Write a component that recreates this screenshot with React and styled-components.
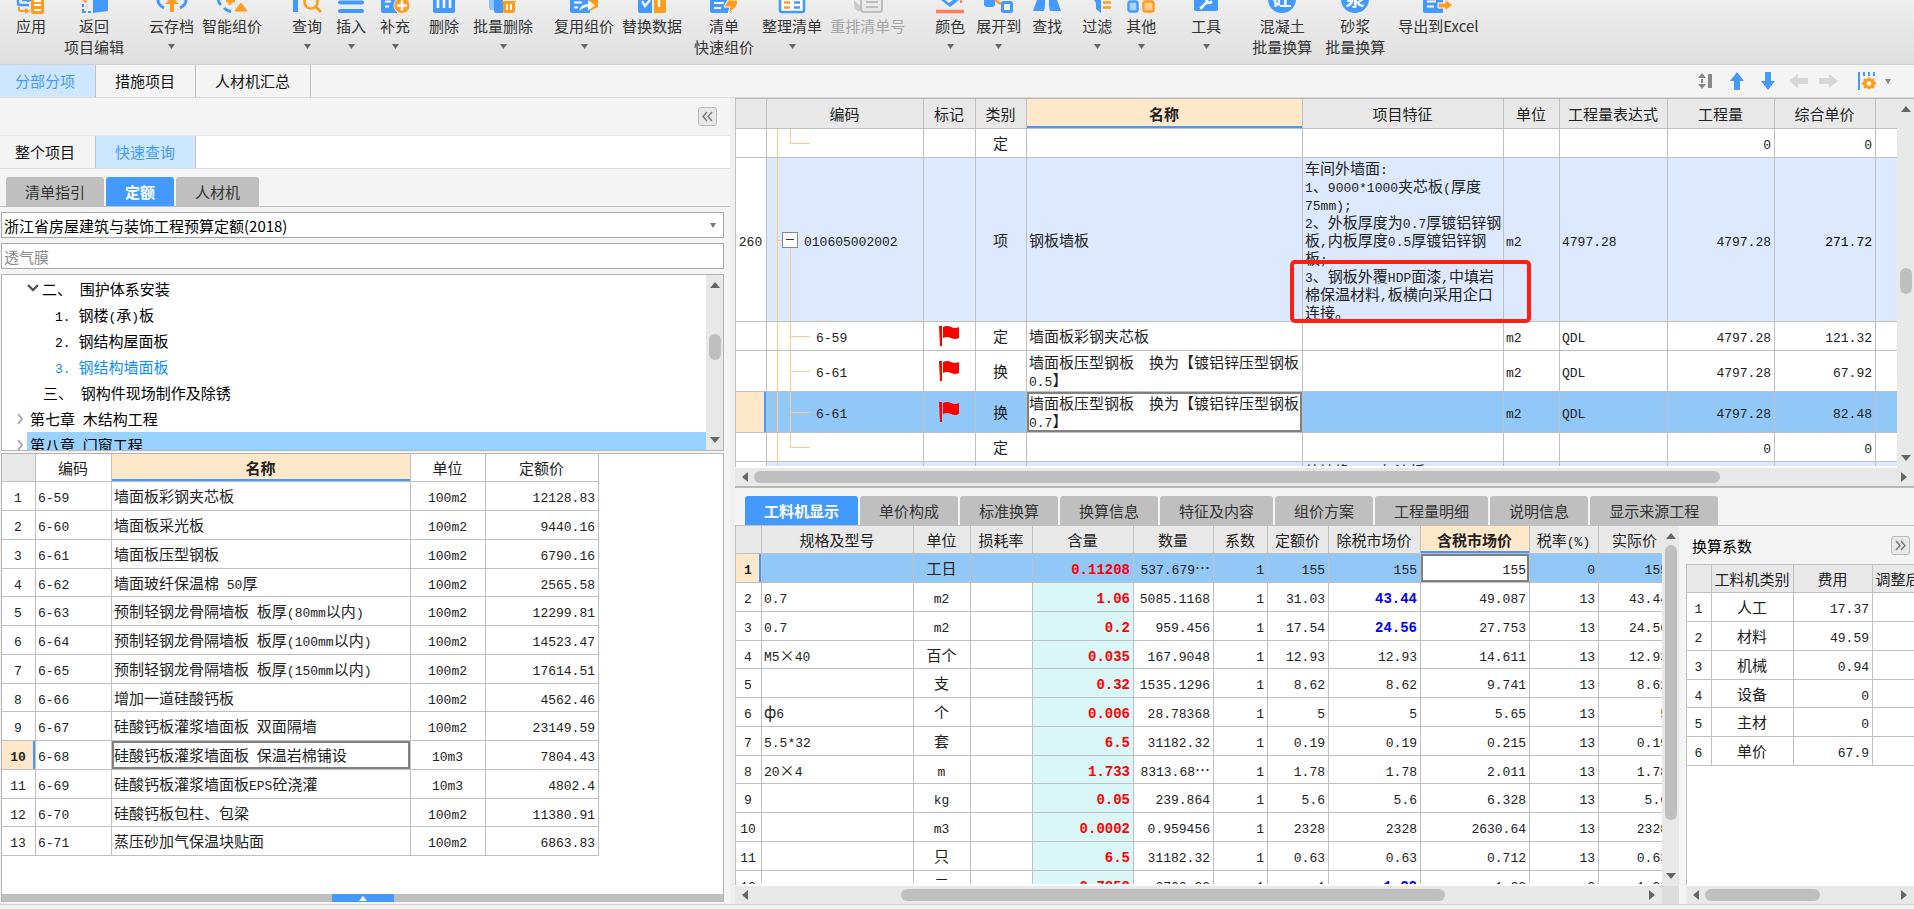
import React from 'react';
import styled, { createGlobalStyle, css } from 'styled-components';

const GlobalStyle = createGlobalStyle`
    * {
        box-sizing: border-box;
    }
    html, body {
        margin: 0;
        height: 100%;
        overflow: hidden;
    }
    body, button, input, select {
        font-family: 'Noto Sans CJK SC', sans-serif;
        font-size: 15px;
        color: #222;
    }
    button {
        border: none;
        padding: 0;
        cursor: pointer;
    }
`;

const LINE = '#c0c0c0';
const BLUE = '#4499ff';
const SKY = '#8fc4fd';
const ORANGE = '#ff9c1f';

const Page = styled.div`
    display: flex;
    flex-direction: column;
    height: 100vh;
    overflow: hidden;
    background: #f4f4f4;
`;

/* ---------- toolbar ---------- */

const Toolbar = styled.header`
    display: flex;
    flex: none;
    height: 65px;
    overflow: hidden;
    background: linear-gradient(#eeeeee, #dfdfdf);
    border-bottom: 1px solid #d0d0d0;
`;

const ToolButton = styled.button`
    display: flex;
    flex-direction: column;
    align-items: center;
    flex: none;
    min-width: 44px;
    padding: 0 4px;
    margin-left: ${props => props.$gap || 0}px;
    background: transparent;
    line-height: 21px;
    white-space: nowrap;
    color: ${props => (props.disabled ? '#a6a6a6' : '#333')};
    svg {
        display: block;
        flex: none;
    }
    > svg:first-child {
        margin-bottom: 1px;
    }
    .caret {
        margin-top: 8px;
    }
`;

const Caret = ({ size = 7, color = '#666', className }) => (
    <svg className={className} width={size} height="5" viewBox="0 0 8 5" preserveAspectRatio="none">
        <path d="M0 0h8L4 5z" fill={color}/>
    </svg>
);

const tools = [
    {
        gap: 9, label: '应用', art: <>
            <path d="M3 0v3q0 2 2 2h9M7 0h9M13 0v2" fill="none" stroke={BLUE} strokeWidth="2.4"/>
            <path d="M4 7v3q0 1 1 1h6" fill="none" stroke={ORANGE} strokeWidth="2"/>
            <path d="M10 8l5 3-5 3z" fill={ORANGE}/>
            <path d="M16 0h13v12q0 2-2 2h-9q-2 0-2-2z" fill={ORANGE}/>
            <path d="M19 1h7M19 5h7M19 10h7" stroke="#fff" strokeWidth="2"/>
        </>
    },
    {
        gap: 7, label: '返回', second: '项目编辑', art: <>
            <path d="M15 0h15v11l-15 2z" fill={BLUE}/>
            <path d="M5 0l4 2" stroke={ORANGE} strokeWidth="2"/>
            <path d="M5 4v3M5 9v3h3M10 12h3" fill="none" stroke={BLUE} strokeWidth="2.2"/>
        </>
    },
    {
        gap: 17, label: '云存档', caret: true, art: <>
            <path d="M2 0q0 5 6 8M30 0q0 5-6 8" fill="none" stroke={BLUE} strokeWidth="3"/>
            <path d="M16-3l7 7h-5v8h-4V4H9z" fill={ORANGE}/>
        </>
    },
    {
        label: '智能组价', art: <>
            <path d="M2 0q1 3 3 5M8 8q3 3 7 3.500" fill="none" stroke={BLUE} strokeWidth="3"/>
            <path d="M14 0v5M10 1h9" stroke={ORANGE} strokeWidth="3"/>
            <path d="M25 3l6 8h-12z" fill={ORANGE} stroke={ORANGE}/>
        </>
    },
    {
        gap: 19, label: '查询', caret: true, art: <>
            <path d="M2 0h5v12H2z" fill={BLUE}/>
            <circle cx="20" cy="2" r="6.500" fill="none" stroke={ORANGE} strokeWidth="2.600"/>
            <path d="M24 6l6 6" stroke={ORANGE} strokeWidth="3"/>
        </>
    },
    {
        label: '插入', caret: true, art: <>
            <path d="M5 2.500h22M5 11h22" stroke={BLUE} strokeWidth="4" strokeLinecap="round"/>
        </>
    },
    {
        label: '补充', caret: true, art: <>
            <path d="M2 0h16v13H4q-2 0-2-2z" fill={BLUE}/>
            <path d="M6 1.500h6M6 6.500h4" stroke="#fff" strokeWidth="2"/>
            <circle cx="23" cy="5.500" r="8" fill={ORANGE} stroke="#eee"/>
            <path d="M18 5.500h10M23 .5v10" stroke="#fff" strokeWidth="2.600"/>
        </>
    },
    {
        gap: 5, label: '删除', art: <>
            <path d="M5 0h22v11q0 2-2 2H7q-2 0-2-2z" fill={BLUE}/>
            <path d="M10 0v8M16 0v8M22 0v8" stroke="#fff" strokeWidth="2.600"/>
        </>
    },
    {
        gap: 3, label: '批量删除', caret: true, art: <>
            <path d="M2 0h10v10H5q-3 0-3-3z" fill={SKY}/>
            <path d="M7 0h9v13h-7q-2 0-2-2z" fill={BLUE}/>
            <path d="M15 1h14v1H28v9q0 2-2 2h-8q-2 0-2-2V3h-1z" fill={ORANGE}/>
            <path d="M20 4v6M24 4v6" stroke="#fff" strokeWidth="2"/>
        </>
    },
    {
        gap: 13, label: '复用组价', caret: true, art: <>
            <path d="M2 0h20v13H4q-2 0-2-2z" fill={BLUE}/>
            <path d="M6 2.500h8M6 7.500h4" stroke="#fff" strokeWidth="2"/>
            <path d="M22 0h8v7l-8 4z" fill={ORANGE}/>
            <path d="M11 11q2-7 9-7V0l7 5.500-7 5V7q-5 0-9 4z" fill="#fff"/>
        </>
    },
    {
        label: '替换数据', art: <>
            <path d="M2 0h14v13H4q-2 0-2-2z" fill={BLUE}/>
            <path d="M6 1l3 5 5-6" fill="none" stroke="#fff" strokeWidth="2.200"/>
            <path d="M18 0h12v11q0 2-2 2H18z" fill={ORANGE}/>
            <path d="M23 0v7" stroke="#fff" strokeWidth="2.400"/>
        </>
    },
    {
        gap: 4, label: '清单', second: '快速组价', art: <>
            <path d="M2 0h22v11q0 2-2 2H4q-2 0-2-2z" fill={BLUE}/>
            <path d="M6 3h10M6 8h7" stroke="#fff" strokeWidth="2"/>
            <path d="M20 0h10l-1 6-9 8 2-7h-6z" fill={ORANGE} stroke="#fff" strokeWidth="1"/>
        </>
    },
    {
        label: '整理清单', caret: true, art: <>
            <path d="M4 0v10q0 2 2 2h20q2 0 2-2V0" fill="#fff" stroke={BLUE} strokeWidth="2.600"/>
            <path d="M8 2.500h6M8 7.500h6" stroke={ORANGE} strokeWidth="2.400"/>
            <path d="M18 2.500h6M18 7.500h6" stroke={BLUE} strokeWidth="2.400"/>
        </>
    },
    {
        label: '重排清单号', disabled: true, art: <>
            <path d="M2 0l6 6v5H5q-3-3-3-7z" fill="#c9c9c9"/>
            <path d="M9 0v9q0 3 3 3h15q3 0 3-3V0" fill="#e9e9e9" stroke="#bdbdbd" strokeWidth="2"/>
            <path d="M14 2h12M14 7h12" stroke="#bdbdbd" strokeWidth="2"/>
        </>
    },
    {
        gap: 19, label: '颜色', caret: true, art: <>
            <path d="M7 0h18l-9 7z" fill={BLUE}/>
            <path d="M11 0h8l-4 3z" fill="#eee"/>
            <path d="M27 0q2 3 0 3t0-3" fill="#ff7f5c" stroke="#ff7f5c"/>
            <path d="M2 11.500h28" stroke="#ff7f5c" strokeWidth="3.500"/>
        </>
    },
    {
        label: '展开到', caret: true, art: <>
            <path d="M1 0h11v4q0 3-3 3H4q-3 0-3-3z" fill={BLUE}/>
            <path d="M12 0l6 4" stroke={ORANGE} strokeWidth="2.400"/>
            <rect x="19.500" y="2.500" width="9" height="9" rx="1" fill="#eaf4ff" stroke={BLUE} strokeWidth="3"/>
        </>
    },
    {
        label: '查找', art: <>
            <path d="M6 0h8v6l-1 5H2zM18 0h8l4 11H19l-1-5z" fill={BLUE}/>
        </>
    },
    {
        gap: 6, label: '过滤', caret: true, art: <>
            <path d="M13 0h7v13l-5-4V3z" fill={BLUE}/>
            <path d="M22 2.500h8M22 7.500h8" stroke={ORANGE} strokeWidth="2.600"/>
        </>
    },
    {
        label: '其他', caret: true, art: <>
            <rect x="3.500" y="1.500" width="9" height="10" rx="2" fill="#a9d3ff" stroke={BLUE} strokeWidth="2.400"/>
            <rect x="18.500" y="1.500" width="10" height="10" rx="2" fill="#ffcf8e" stroke={ORANGE} strokeWidth="2.400"/>
        </>
    },
    {
        gap: 21, label: '工具', caret: true, art: <>
            <path d="M4 0h24v9q0 2-2 2H6q-2 0-2-2z" fill={BLUE}/>
            <path d="M11 8l6-6q-1-2 1-3M17 2q2 2 4 0" fill="none" stroke="#fff" strokeWidth="2.600" strokeLinecap="round"/>
        </>
    },
    {
        gap: 20, label: '混凝土', second: '批量换算', art: <>
            <circle cx="16" cy="-1" r="14" fill={BLUE}/>
            <text x="16" y="6" fontSize="19" fontWeight="700" fill="#fff" textAnchor="middle">砼</text>
        </>
    },
    {
        gap: 5, label: '砂浆', second: '批量换算', art: <>
            <circle cx="16" cy="-1" r="14" fill={BLUE}/>
            <text x="16" y="6" fontSize="19" fontWeight="700" fill="#fff" textAnchor="middle">浆</text>
        </>
    },
    {
        gap: 5, label: '导出到Excel', art: <>
            <path d="M1 0h20v13H3q-2 0-2-2z" fill={BLUE}/>
            <path d="M5 1.500h9M5 6.500h7" stroke="#fff" strokeWidth="2"/>
            <path d="M16 3h7V-1l8 6-8 6V8h-7z" fill={ORANGE} stroke="#fff" strokeWidth="1"/>
        </>
    }
];

const Tool = ({ tool }) => (
    <ToolButton $gap={tool.gap} disabled={tool.disabled}>
        <svg width="32" height="14" viewBox="0 0 32 14">{tool.art}</svg>
        <span>{tool.label}</span>
        {tool.second && <span>{tool.second}</span>}
        {tool.caret && <Caret className="caret"/>}
    </ToolButton>
);

/* ---------- tabs ---------- */

const FlatTabs = styled.nav`
    display: flex;
    flex: none;
    height: 33px;
    background: ${props => props.$bg || '#f4f4f4'};
    border-bottom: 1px solid #dcdcdc;
`;

const FlatTab = styled.button`
    padding: 0 20px 0 19px;
    line-height: 32px;
    background: ${props => (props.$active ? '#cce7ff' : '#f4f4f4')};
    color: ${props => (props.$active ? BLUE : '#111')};
    border-right: 1px solid ${LINE};
    &:first-child {
        padding-left: 15px;
    }
`;

const ViewActions = styled.div`
    display: flex;
    align-items: center;
    gap: 11px;
    margin-left: auto;
    padding-right: 23px;
    button {
        display: flex;
        align-items: center;
        gap: 8px;
        background: transparent;
    }
`;

const BlockTabs = styled.nav`
    display: flex;
    flex: none;
    gap: 2px;
    height: 38px;
    padding: 8px 0 0 ${props => props.$indent}px;
    border-bottom: 1px solid ${LINE};
`;

const BlockTab = styled.button`
    padding: 0 19px;
    line-height: 29px;
    border-radius: 3px 3px 0 0;
    background: ${props => (props.$active ? BLUE : '#bfbfbf')};
    color: ${props => (props.$active ? '#fff' : '#333')};
    font-weight: ${props => (props.$active ? 700 : 400)};
`;

/* ---------- layout ---------- */

const Body = styled.div`
    display: grid;
    grid-template-columns: 735px minmax(0, 1fr);
    flex: 1;
    min-height: 0;
`;

const Side = styled.aside`
    display: flex;
    flex-direction: column;
    min-height: 0;
    border-right: 5px solid #efefef;
`;

const SideHead = styled.div`
    display: flex;
    justify-content: flex-end;
    align-items: center;
    flex: none;
    height: 38px;
    padding-right: 13px;
    border-bottom: 1px solid #e4e4e4;
`;

const FoldButton = styled.button`
    display: flex;
    align-items: center;
    justify-content: center;
    width: 19px;
    height: 19px;
    background: #e8e8e8;
    border: 1px solid #bbb;
    border-radius: 3px;
`;

const Query = styled.div`
    display: flex;
    flex-direction: column;
    flex: 1;
    gap: 5px;
    min-height: 0;
    margin: 5px 6px 2px 1px;
`;

const Field = styled.label`
    display: block;
    position: relative;
    height: 26px;
    flex: none;
    select, input {
        display: block;
        width: 100%;
        height: 100%;
        padding: 0 2px;
        border: 1px solid #a8a8a8;
        border-radius: 0;
        background: #fff;
        appearance: none;
        outline: none;
    }
    select {
        color: #000;
    }
    input {
        color: #888;
    }
    svg {
        position: absolute;
        right: 8px;
        top: 11px;
    }
`;

const Tree = styled.div`
    display: flex;
    flex: none;
    height: 177px;
    background: #fff;
    border: 1px solid #b4b4b4;
`;

const TreeList = styled.ul`
    flex: 1;
    margin: 0;
    padding: 1px 0 0;
    overflow: hidden;
    list-style: none;
`;

const TreeItem = styled.li`
    display: flex;
    align-items: center;
    height: 26px;
    padding-left: ${props => props.$indent}px;
    color: ${props => (props.$current ? '#0a8cff' : '#000')};
    white-space: pre;
    svg {
        flex: none;
        width: 12px;
    }
`;

const TreeLabel = styled.span`
    flex: 1;
    padding-left: 3px;
    line-height: 26px;
    background: ${props => (props.$selected ? '#99d1ff' : 'transparent')};
`;

const Results = styled.div`
    display: flex;
    flex-direction: column;
    flex: 1;
    min-height: 0;
    margin-top: -3px;
    background: #fff;
    border: 1px solid #b4b4b4;
    border-bottom: none;
    overflow: hidden;
`;

const Drawer = styled.div`
    display: flex;
    justify-content: center;
    flex: none;
    height: 8px;
    margin-top: auto;
    background: #bfbfbf;
    button {
        display: flex;
        align-items: center;
        justify-content: center;
        width: 62px;
        background: ${BLUE};
    }
`;

const Main = styled.main`
    display: flex;
    flex-direction: column;
    min-width: 0;
    min-height: 0;
`;

const UpperPane = styled.section`
    display: flex;
    flex-direction: column;
    flex: none;
    height: 390px;
    background: #e8e8e8;
    border-top: 1px solid #b4b4b4;
    border-bottom: 2px solid #b8b8b8;
`;

const LowerPane = styled.section`
    display: flex;
    flex-direction: column;
    flex: 1;
    min-height: 0;
`;

const Columns = styled.div`
    display: grid;
    grid-template-columns: minmax(0, 1fr) 228px;
    gap: 7px;
    flex: 1;
    min-height: 0;
`;

const Pane = styled.div`
    display: flex;
    flex-direction: column;
    flex: 1;
    min-width: 0;
    min-height: 0;
`;

const Row = styled.div`
    display: flex;
    flex: 1;
    min-height: 0;
`;

const Viewport = styled.div`
    position: relative;
    flex: 1;
    min-width: 0;
    overflow: hidden;
    background: #fff;
    border-left: 1px solid ${LINE};
    border-bottom: 2px solid #fff;
`;

const PaneTitle = styled.div`
    display: flex;
    align-items: center;
    justify-content: space-between;
    flex: none;
    height: 38px;
    padding: 0 4px 0 6px;
    color: #000;
`;

const Status = styled.footer`
    flex: none;
    height: 5px;
    background: #f2f2f2;
    border-top: 1px solid #d0d0d0;
`;

/* ---------- scrollbars ---------- */

const Track = styled.div`
    display: flex;
    flex: ${props => (props.$grow ? 1 : 'none')};
    flex-direction: ${props => (props.$vertical ? 'column' : 'row')};
    align-items: center;
    justify-content: space-between;
    background: #e8e8e8;
    ${props => (props.$vertical
        ? css`width: 17px; padding: 5px 0;`
        : css`height: 18px; padding: 0 5px;`)}
    svg {
        flex: none;
    }
`;

const Groove = styled.div`
    display: flex;
    flex: 1;
    flex-direction: ${props => (props.$vertical ? 'column' : 'row')};
    ${props => (props.$vertical
        ? css`width: 12px; margin: 4px 0;`
        : css`height: 12px; margin: 0 4px;`)}
`;

const Thumb = styled.div`
    flex: none;
    background: #bfbfbf;
    border-radius: 6px;
    ${props => (props.$vertical
        ? css`width: 12px; margin-top: ${props.$start}px; height: ${props.$size}px;`
        : css`height: 12px; margin-left: ${props.$start}px; width: ${props.$size}px;`)}
`;

const ScrollRow = styled.div`
    display: flex;
    flex: none;
`;

const Corner = styled.div`
    width: 17px;
    flex: none;
    background: #dcdcdc;
`;

const arrows = {
    up: 'M0 8l5-6 5 6z',
    down: 'M0 2h10L5 8z',
    left: 'M8 0v10L2 5z',
    right: 'M2 0v10l6-5z'
};

const Arrow = ({ dir }) => (
    <svg width="10" height="10" viewBox="0 0 10 10"><path d={arrows[dir]} fill="#666"/></svg>
);

const ScrollBar = ({ vertical, start, size, grow }) => (
    <Track $vertical={vertical} $grow={grow}>
        <Arrow dir={vertical ? 'up' : 'left'}/>
        <Groove $vertical={vertical}>
            <Thumb $vertical={vertical} $start={start} $size={size}/>
        </Groove>
        <Arrow dir={vertical ? 'down' : 'right'}/>
    </Track>
);

/* ---------- tables ---------- */

const Table = styled.table`
    width: ${props => props.$width}px;
    table-layout: fixed;
    border-spacing: 0;
    line-height: 20px;
    th, td {
        padding: 0 3px 0 2px;
        overflow: hidden;
        white-space: pre;
        border-right: 1px solid ${LINE};
        border-bottom: 1px solid ${LINE};
    }
    tbody tr {
        height: 29px;
    }
    tbody tr:nth-child(4n) {
        height: 28px;
    }
`;

const Th = styled.th`
    height: ${props => props.$height || 28}px;
    font-weight: ${props => (props.$active ? 700 : 400)};
    background: ${props => (props.$active ? '#ffe7c9' : props.$plain ? '#fff' : '#e8e8e8')};
    box-shadow: ${props => (props.$active ? `inset 0 -2px ${BLUE}` : 'none')};
`;

const Td = styled.td`
    text-align: ${props => props.$align || 'left'};
    vertical-align: ${props => props.$valign || 'middle'};
    ${props => props.$bg && css`background: ${props.$bg};`}
    ${props => props.$color && css`color: ${props.$color};`}
    ${props => props.$focus && css`
        background: #fff;
        box-shadow: inset 0 0 0 2px #808080;
    `}
`;

const NumberCell = styled(Td)`
    text-align: center;
    ${props => props.$active && css`
        background: #ffe7c9;
        font-weight: 700;
        box-shadow: inset -2px 0 ${BLUE};
    `}
`;

const Latin = styled.span`
    font-family: 'Liberation Mono', monospace;
    font-size: ${props => (props.$bold ? 14 : 13)}px;
    font-weight: ${props => (props.$bold ? 700 : 'inherit')};
    line-height: 0;
`;

// ascii runs are set in the mono face so that numbers line up
const Text = ({ children, bold }) => String(children)
    .split(/([\x20-\x7e]+)/)
    .filter(part => part)
    .map((part, i) => (/^[\x20-\x7e]+$/.test(part)
        ? <Latin key={i} $bold={bold}>{part}</Latin>
        : <React.Fragment key={i}>{part}</React.Fragment>));

const Cols = ({ widths }) => (
    <colgroup>
        {widths.map((width, i) => <col key={i} style={{ width }}/>)}
    </colgroup>
);

const sum = list => list.reduce((a, b) => a + b, 0);

/* ---------- quota list ---------- */

const quotaWidths = [34, 76, 299, 75, 113];

const quotas = [
    ['6-59', '墙面板彩钢夹芯板', '100m2', '12128.83'],
    ['6-60', '墙面板采光板', '100m2', '9440.16'],
    ['6-61', '墙面板压型钢板', '100m2', '6790.16'],
    ['6-62', '墙面玻纤保温棉 50厚', '100m2', '2565.58'],
    ['6-63', '预制轻钢龙骨隔墙板 板厚(80mm以内)', '100m2', '12299.81'],
    ['6-64', '预制轻钢龙骨隔墙板 板厚(100mm以内)', '100m2', '14523.47'],
    ['6-65', '预制轻钢龙骨隔墙板 板厚(150mm以内)', '100m2', '17614.51'],
    ['6-66', '增加一道硅酸钙板', '100m2', '4562.46'],
    ['6-67', '硅酸钙板灌浆墙面板 双面隔墙', '100m2', '23149.59'],
    ['6-68', '硅酸钙板灌浆墙面板 保温岩棉铺设', '10m3', '7804.43'],
    ['6-69', '硅酸钙板灌浆墙面板EPS砼浇灌', '10m3', '4802.4'],
    ['6-70', '硅酸钙板包柱、包梁', '100m2', '11380.91'],
    ['6-71', '蒸压砂加气保温块贴面', '100m2', '6863.83']
];

const QuotaTable = () => (
    <Table $width={sum(quotaWidths)}>
        <Cols widths={quotaWidths}/>
        <thead>
            <tr>
                <Th/>
                <Th $plain>编码</Th>
                <Th $active>名称</Th>
                <Th $plain>单位</Th>
                <Th $plain>定额价</Th>
            </tr>
        </thead>
        <tbody>
            {quotas.map(([code, name, unit, price], i) => (
                <tr key={code}>
                    <NumberCell $active={i === 9}><Text>{i + 1}</Text></NumberCell>
                    <Td><Text>{code}</Text></Td>
                    <Td $focus={i === 9}><Text>{name}</Text></Td>
                    <Td $align="center"><Text>{unit}</Text></Td>
                    <Td $align="right"><Text>{price}</Text></Td>
                </tr>
            ))}
        </tbody>
    </Table>
);

/* ---------- bill of quantities ---------- */

const billWidths = [31, 157, 52, 51, 276, 201, 56, 108, 107, 101, 60];

const BillRow = styled.tr`
    &&& {
        height: ${props => props.$height}px;
    }
    background: ${props => props.$bg || '#fff'};
    line-height: 18px;
`;

const CodeCell = styled.td`
    position: relative;
    && {
        padding-left: ${props => (props.$root ? 37 : 49)}px;
    }
`;

const Rail = styled.i`
    position: absolute;
    left: ${props => props.$x}px;
    top: ${props => props.$top || 0};
    bottom: ${props => props.$bottom || 0};
    border-left: 1px solid #fcca88;
`;

const Twig = styled.i`
    position: absolute;
    left: ${props => props.$x}px;
    top: 50%;
    width: ${props => props.$length}px;
    border-top: 1px solid #fcca88;
`;

const Toggle = styled.button`
    position: absolute;
    left: 15px;
    top: calc(50% - 8px);
    width: 16px;
    height: 16px;
    background: #fff;
    border: 1px solid #888;
    &::after {
        content: '';
        display: block;
        margin: 0 3px;
        border-top: 1px solid #333;
    }
`;

const Flag = () => (
    <svg width="20" height="20" viewBox="0 0 20 20">
        <path d="M0 0h3v20H1z" fill="#f00"/>
        <path d="M4 1q4-2 8 0t8 0v11q-4 2-8 0t-8 0z" fill="#f00"/>
    </svg>
);

const FlagCell = styled.td`
    text-align: center;
    svg {
        display: block;
        margin: 0 auto;
    }
`;

const Highlight = styled.div`
    position: absolute;
    left: 554px;
    top: 161px;
    width: 241px;
    height: 63px;
    border: 4px solid #ff1e10;
    border-radius: 5px;
`;

const features = `车间外墙面:
1、9000*1000夹芯板(厚度
75mm);
2、外板厚度为0.7厚镀铝锌钢
板,内板厚度0.5厚镀铝锌钢
板;
3、钢板外覆HDP面漆,中填岩
棉保温材料,板横向采用企口
连接。`;

const bills = [
    { height: 29, last: true, kind: '定', qty: '0', price: '0' },
    {
        height: 164, bg: '#dce9fe', root: true, no: '260', code: '010605002002', kind: '项', name: '钢板墙板',
        features, unit: 'm2', expr: '4797.28', qty: '4797.28', price: '271.72'
    },
    { height: 29, code: '6-59', flag: true, kind: '定', name: '墙面板彩钢夹芯板', unit: 'm2', expr: 'QDL', qty: '4797.28', price: '121.32' },
    { height: 41, code: '6-61', flag: true, kind: '换', name: '墙面板压型钢板　换为【镀铝锌压型钢板\n0.5】', unit: 'm2', expr: 'QDL', qty: '4797.28', price: '67.92' },
    { height: 41, bg: '#92c8f8', active: true, code: '6-61', flag: true, kind: '换', name: '墙面板压型钢板　换为【镀铝锌压型钢板\n0.7】', unit: 'm2', expr: 'QDL', qty: '4797.28', price: '82.48' },
    { height: 29, last: true, kind: '定', qty: '0', price: '0' },
    { height: 29, bg: '#dce9fe', next: true, features: '外墙檐口、包边板' }
];

const BillTable = () => (
    <Table $width={sum(billWidths)}>
        <Cols widths={billWidths}/>
        <thead>
            <tr>
                <Th $height={30}/>
                <Th>编码</Th>
                <Th>标记</Th>
                <Th>类别</Th>
                <Th $active>名称</Th>
                <Th>项目特征</Th>
                <Th>单位</Th>
                <Th>工程量表达式</Th>
                <Th>工程量</Th>
                <Th>综合单价</Th>
                <Th/>
            </tr>
        </thead>
        <tbody>
            {bills.map((bill, i) => (
                <BillRow key={i} $height={bill.height} $bg={bill.bg}>
                    <NumberCell $bg="#fff" $active={bill.active}><Text>{bill.no || ''}</Text></NumberCell>
                    <CodeCell $root={bill.root}>
                        <Rail $x={10}/>
                        {!bill.next && (
                            <Rail $x={23} $top={bill.root ? '50%' : 0} $bottom={bill.last ? '50%' : 0}/>
                        )}
                        {bill.root && <Twig $x={10} $length={5}/>}
                        {!bill.root && !bill.next && <Twig $x={23} $length={20}/>}
                        {bill.root && <Toggle aria-label="折叠"/>}
                        <Text>{bill.code || ''}</Text>
                    </CodeCell>
                    <FlagCell>{bill.flag && <Flag/>}</FlagCell>
                    <Td $align="center">{bill.kind}</Td>
                    <Td $focus={bill.active}><Text>{bill.name || ''}</Text></Td>
                    <Td $valign={bill.next ? 'top' : 'middle'}><Text>{bill.features || ''}</Text></Td>
                    <Td><Text>{bill.unit || ''}</Text></Td>
                    <Td><Text>{bill.expr || ''}</Text></Td>
                    <Td $align="right"><Text>{bill.qty || ''}</Text></Td>
                    <Td $align="right" $color={bill.root ? '#000' : undefined}><Text>{bill.price || ''}</Text></Td>
                    <Td/>
                </BillRow>
            ))}
        </tbody>
    </Table>
);

/* ---------- labour, material and machine list ---------- */

const resourceWidths = [26, 152, 57, 62, 101, 80, 54, 61, 92, 109, 69, 73];

const resources = [
    ['', '工日', '0.11208', '537.679…', '1', '155', '155', '155', '0', '155'],
    ['0.7', 'm2', '1.06', '5085.1168', '1', '31.03', '43.44', '49.087', '13', '43.44'],
    ['0.7', 'm2', '0.2', '959.456', '1', '17.54', '24.56', '27.753', '13', '24.56'],
    ['M5×40', '百个', '0.035', '167.9048', '1', '12.93', '12.93', '14.611', '13', '12.93'],
    ['', '支', '0.32', '1535.1296', '1', '8.62', '8.62', '9.741', '13', '8.62'],
    ['ф6', '个', '0.006', '28.78368', '1', '5', '5', '5.65', '13', '5'],
    ['5.5*32', '套', '6.5', '31182.32', '1', '0.19', '0.19', '0.215', '13', '0.19'],
    ['20×4', 'm', '1.733', '8313.68…', '1', '1.78', '1.78', '2.011', '13', '1.78'],
    ['', 'kg', '0.05', '239.864', '1', '5.6', '5.6', '6.328', '13', '5.6'],
    ['', 'm3', '0.0002', '0.959456', '1', '2328', '2328', '2630.64', '13', '2328'],
    ['', '只', '6.5', '31182.32', '1', '0.63', '0.63', '0.712', '13', '0.63'],
    ['', '元', '0.7858', '3700.22', '1', '1', '1.22', '1.22', '0', '1.22']
];

const adjusted = [1, 2, 11];

const ResourceRow = styled.tr`
    background: ${props => (props.$active ? '#92c8f8' : '#fff')};
`;

const ResourceTable = () => (
    <Table $width={sum(resourceWidths)}>
        <Cols widths={resourceWidths}/>
        <thead>
            <tr>
                <Th/>
                <Th>规格及型号</Th>
                <Th>单位</Th>
                <Th>损耗率</Th>
                <Th>含量</Th>
                <Th>数量</Th>
                <Th>系数</Th>
                <Th>定额价</Th>
                <Th>除税市场价</Th>
                <Th $active>含税市场价</Th>
                <Th><Text>税率(%)</Text></Th>
                <Th>实际价</Th>
            </tr>
        </thead>
        <tbody>
            {resources.map(([spec, unit, content, qty, factor, quota, net, gross, rate, actual], i) => (
                <ResourceRow key={i} $active={i === 0}>
                    <NumberCell $bg="#fff" $active={i === 0}><Text>{i + 1}</Text></NumberCell>
                    <Td><Text>{spec}</Text></Td>
                    <Td $align="center"><Text>{unit}</Text></Td>
                    <Td/>
                    <Td $align="right" $color="#f00" $bg={i ? '#daf7f8' : undefined}><Text bold>{content}</Text></Td>
                    <Td $align="right"><Text>{qty}</Text></Td>
                    <Td $align="right"><Text>{factor}</Text></Td>
                    <Td $align="right"><Text>{quota}</Text></Td>
                    <Td $align="right" $color={adjusted.includes(i) ? '#00f' : undefined}>
                        <Text bold={adjusted.includes(i)}>{net}</Text>
                    </Td>
                    <Td $align="right" $focus={i === 0}><Text>{gross}</Text></Td>
                    <Td $align="right"><Text>{rate}</Text></Td>
                    <Td $align="right"><Text>{actual}</Text></Td>
                </ResourceRow>
            ))}
        </tbody>
    </Table>
);

/* ---------- conversion factors ---------- */

const factorWidths = [25, 82, 79, 82];

const factors = [
    ['人工', '17.37'],
    ['材料', '49.59'],
    ['机械', '0.94'],
    ['设备', '0'],
    ['主材', '0'],
    ['单价', '67.9']
];

const FactorTable = () => (
    <Table $width={sum(factorWidths)}>
        <Cols widths={factorWidths}/>
        <thead>
            <tr>
                <Th/>
                <Th>工料机类别</Th>
                <Th>费用</Th>
                <Th>调整后系数</Th>
            </tr>
        </thead>
        <tbody>
            {factors.map(([kind, cost], i) => (
                <tr key={kind}>
                    <NumberCell><Text>{i + 1}</Text></NumberCell>
                    <Td $align="center">{kind}</Td>
                    <Td $align="right"><Text>{cost}</Text></Td>
                    <Td/>
                </tr>
            ))}
        </tbody>
    </Table>
);

const FactorViewport = styled(Viewport)`
    border-top: 1px solid ${LINE};
`;

/* ---------- tree ---------- */

const chapters = [
    { indent: 25, icon: 'open', label: '二、 围护体系安装' },
    { indent: 50, label: '1. 钢楼(承)板' },
    { indent: 50, label: '2. 钢结构屋面板' },
    { indent: 50, label: '3. 钢结构墙面板', current: true },
    { indent: 38, label: '三、 钢构件现场制作及除锈' },
    { indent: 13, icon: 'closed', label: '第七章 木结构工程' },
    { indent: 13, icon: 'closed', label: '第八章 门窗工程', selected: true }
];

const TreeIcon = ({ type }) => (
    <svg width="12" height="12" viewBox="0 0 12 12">
        {type === 'open'
            ? <path d="M1 2l5 5 5-5" fill="none" stroke="#555" strokeWidth="2.400"/>
            : <path d="M3 1l4 5-4 5" fill="none" stroke="#aaa" strokeWidth="2"/>}
    </svg>
);

const FoldIcon = ({ right }) => (
    <svg width="13" height="11" viewBox="0 0 13 11">
        <path
            d={right ? 'M2 1l4 4.500-4 4.500M7 1l4 4.500-4 4.500' : 'M6 1L2 5.500 6 10M11 1L7 5.500 11 10'}
            fill="none" stroke="#777" strokeWidth="1.400"
        />
    </svg>
);

const lowerTabs = ['工料机显示', '单价构成', '标准换算', '换算信息', '特征及内容', '组价方案', '工程量明细', '说明信息', '显示来源工程'];

const App = () => (
    <Page>
        <GlobalStyle/>
        <Toolbar>
            {tools.map(tool => <Tool key={tool.label} tool={tool}/>)}
        </Toolbar>
        <FlatTabs>
            <FlatTab $active>分部分项</FlatTab>
            <FlatTab>措施项目</FlatTab>
            <FlatTab>人材机汇总</FlatTab>
            <ViewActions>
                <button aria-label="行高">
                    <svg width="18" height="18" viewBox="0 0 18 18">
                        <path d="M4 1l4 5H0zM4 17l4-5H0zM3 7h2v4H3z" fill="#888"/>
                        <path d="M10 2h4v14h-4z" fill="#888"/>
                    </svg>
                </button>
                <button aria-label="上移">
                    <svg width="20" height="20" viewBox="0 0 20 20"><path d="M10 1l7 9h-4v9H7v-9H3z" fill={BLUE}/></svg>
                </button>
                <button aria-label="下移">
                    <svg width="20" height="20" viewBox="0 0 20 20"><path d="M10 19l7-9h-4V1H7v9H3z" fill={BLUE}/></svg>
                </button>
                <button aria-label="左移">
                    <svg width="19" height="14" viewBox="0 0 19 14"><path d="M0 7l9-7v4h10v6H9v4z" fill="#d6d6d6"/></svg>
                </button>
                <button aria-label="右移">
                    <svg width="19" height="14" viewBox="0 0 19 14"><path d="M19 7l-9-7v4H0v6h10v4z" fill="#d6d6d6"/></svg>
                </button>
                <button aria-label="列设置">
                    <svg width="28" height="20" viewBox="0 0 28 20">
                        <path d="M10 1v18M15 1v4M20 1v4M25 1v4" stroke={BLUE} strokeWidth="2"/>
                        <path
                            d="M20 6l2 2 3-.5.5 3 2 2-2 2-.5 3-3-.5-2 2-2-2-3 .5-.5-3-2-2 2-2 .5-3 3 .5z"
                            fill={ORANGE}
                        />
                        <circle cx="20" cy="12.500" r="2.200" fill="#fff"/>
                    </svg>
                    <Caret size={6} color="#888"/>
                </button>
            </ViewActions>
        </FlatTabs>
        <Body>
            <Side>
                <SideHead>
                    <FoldButton aria-label="收起"><FoldIcon/></FoldButton>
                </SideHead>
                <FlatTabs $bg="#fff">
                    <FlatTab>整个项目</FlatTab>
                    <FlatTab $active>快速查询</FlatTab>
                </FlatTabs>
                <BlockTabs $indent={6}>
                    <BlockTab>清单指引</BlockTab>
                    <BlockTab $active>定额</BlockTab>
                    <BlockTab>人材机</BlockTab>
                </BlockTabs>
                <Query>
                    <Field>
                        <select aria-label="定额库" defaultValue="2018">
                            <option value="2018">浙江省房屋建筑与装饰工程预算定额(2018)</option>
                        </select>
                        <Caret size={6} color="#777"/>
                    </Field>
                    <Field>
                        <input aria-label="查询条件" type="text" defaultValue="透气膜"/>
                    </Field>
                    <Tree>
                        <TreeList>
                            {chapters.map(item => (
                                <TreeItem key={item.label} $indent={item.indent} $current={item.current}>
                                    {item.icon && <TreeIcon type={item.icon}/>}
                                    <TreeLabel $selected={item.selected}><Text>{item.label}</Text></TreeLabel>
                                </TreeItem>
                            ))}
                        </TreeList>
                        <ScrollBar vertical start={40} size={26}/>
                    </Tree>
                    <Results>
                        <QuotaTable/>
                        <Drawer>
                            <button aria-label="展开"><svg width="8" height="5" viewBox="0 0 8 5"><path d="M4 0l4 5H0z" fill="#fff"/></svg></button>
                        </Drawer>
                    </Results>
                </Query>
            </Side>
            <Main>
                <UpperPane>
                    <Row>
                        <Viewport>
                            <BillTable/>
                            <Highlight/>
                        </Viewport>
                        <ScrollBar vertical start={150} size={26}/>
                    </Row>
                    <ScrollBar start={0} size={966}/>
                </UpperPane>
                <LowerPane>
                    <BlockTabs $indent={10}>
                        {lowerTabs.map((label, i) => <BlockTab key={label} $active={i === 0}>{label}</BlockTab>)}
                    </BlockTabs>
                    <Columns>
                        <Pane>
                            <Row>
                                <Viewport><ResourceTable/></Viewport>
                                <ScrollBar vertical start={0} size={275}/>
                            </Row>
                            <ScrollRow>
                                <ScrollBar start={147} size={544} grow/>
                                <Corner/>
                            </ScrollRow>
                        </Pane>
                        <Pane>
                            <PaneTitle>
                                换算系数
                                <FoldButton aria-label="收起"><FoldIcon right/></FoldButton>
                            </PaneTitle>
                            <FactorViewport><FactorTable/></FactorViewport>
                            <ScrollBar start={0} size={115}/>
                        </Pane>
                    </Columns>
                </LowerPane>
            </Main>
        </Body>
        <Status/>
    </Page>
);

export default App;
